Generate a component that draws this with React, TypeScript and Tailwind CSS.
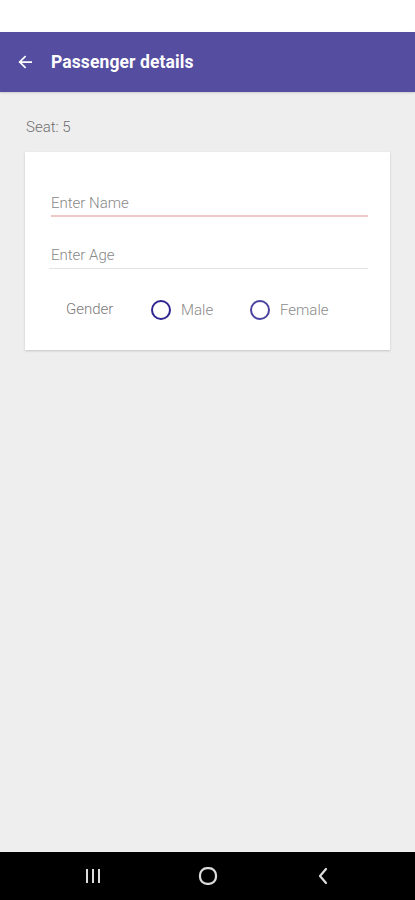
import React from "react";

export default function App() {
  return (
    <div className="w-[415px] h-[900px] flex flex-col bg-[#eeeeee]" style={{ fontFamily: "Roboto, 'Noto Sans', sans-serif" }}>
      <div className="h-[32px] bg-white" />
      <div className="h-[60px] bg-[#554da0] flex items-center shadow-[0_1px_2px_rgba(0,0,0,0.15)]">
        <div className="w-[51px] flex justify-center pl-[1px]">
          <svg width="14" height="14" viewBox="0 0 16 16" className="mr-[2px] -mt-[1px]">
            <path d="M15 8H2M8 2L2 8l6 6" stroke="white" strokeWidth="2" fill="none" strokeLinecap="square" />
          </svg>
        </div>
        <div className="text-white font-bold text-[17.5px] tracking-[0.1px]">Passenger details</div>
      </div>
      <div className="flex-1 flex flex-col">
        <div className="pl-[26px] pt-[25px] text-[15px] font-light text-[#6e6e6e] leading-[20px]">Seat: 5</div>
        <div className="mx-[25px] mt-[15px] h-[198px] bg-white shadow-[0_1px_2px_rgba(0,0,0,0.18)] flex flex-col pl-[26px] pr-[22px]">
          <div className="mt-[41px] text-[15px] text-[#888] font-light leading-[20px]">Enter Name</div>
          <div className="mt-[2px] h-[2px] bg-[#ecc8c6]" />
          <div className="mt-[28px] text-[15px] text-[#888] font-light leading-[20px]">Enter Age</div>
          <div className="mt-[3px] -ml-[2px] h-[1px] bg-[#e3e3e3]" />
          <div className="mt-[30px] flex items-center">
            <div className="ml-[15px] w-[85px] text-[15px] text-[#7a7a7a] font-light -mt-[3px]">Gender</div>
            <div className="w-[20px] h-[20px] rounded-full border-2 border-[#2f2590]" />
            <div className="ml-[10px] w-[69px] text-[15px] text-[#8a8a8a] font-light">Male</div>
            <div className="w-[20px] h-[20px] rounded-full border-2 border-[#4a44a0]" />
            <div className="ml-[10px] text-[15px] text-[#8a8a8a] font-light">Female</div>
          </div>
        </div>
      </div>
      <div className="h-[48px] bg-black flex items-center">
        <div className="w-[185px] flex justify-end pr-[83px]">
          <svg width="18" height="16" viewBox="0 0 18 16">
            <rect x="2" y="1" width="2" height="14" fill="#ddd" />
            <rect x="8" y="1" width="2" height="14" fill="#ddd" />
            <rect x="14" y="1" width="2" height="14" fill="#ddd" />
          </svg>
        </div>
        <div className="w-[46px] flex justify-center">
          <svg width="20" height="18" viewBox="0 0 20 18">
            <rect x="2" y="1.2" width="16" height="15.6" rx="7" fill="none" stroke="#ddd" strokeWidth="2.2" />
          </svg>
        </div>
        <div className="ml-[86px]">
          <svg width="12" height="18" viewBox="0 0 12 18">
            <path d="M9 2L3 9l6 7" stroke="#ddd" strokeWidth="2.2" fill="none" strokeLinecap="round" strokeLinejoin="round" />
          </svg>
        </div>
      </div>
    </div>
  );
}
